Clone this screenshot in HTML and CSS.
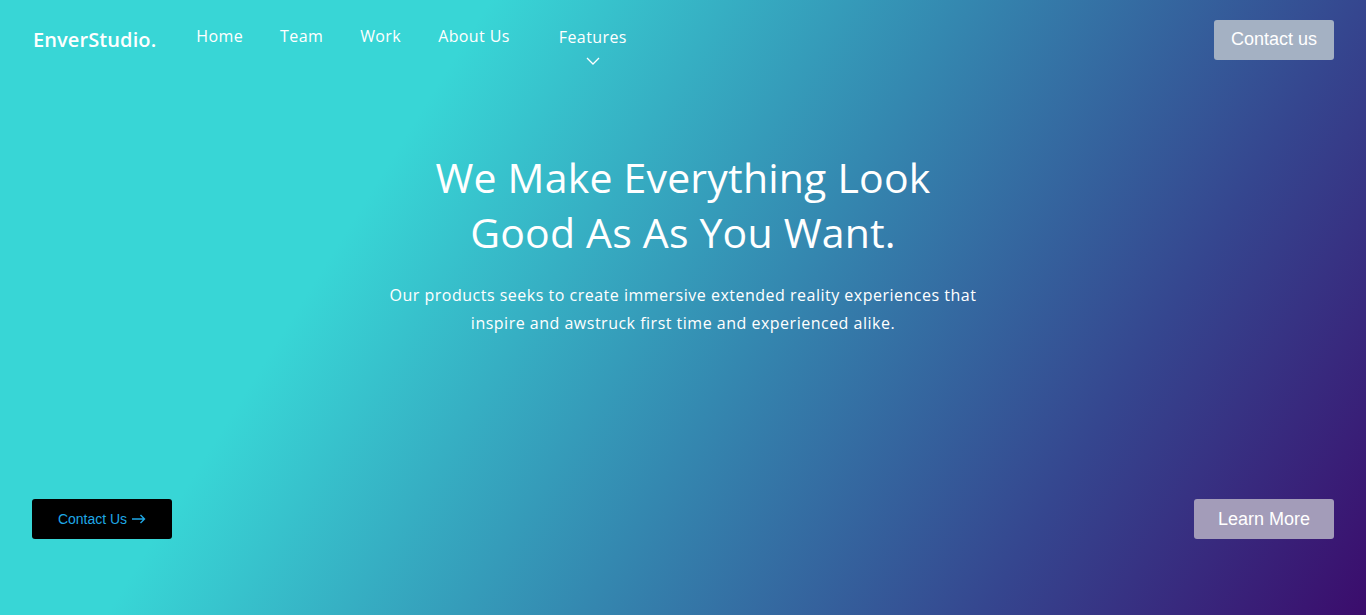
FILE: index.html
```html
<!DOCTYPE html>
<html lang="en">
<head>
<meta charset="utf-8">
<title>EnverStudio</title>
<link rel="stylesheet" href="styles.css">
</head>
<body>
<div class="page">
  <header class="nav">
    <div class="brand">EnverStudio.</div>
    <nav class="links">
      <a class="link" href="#">Home</a>
      <a class="link" href="#">Team</a>
      <a class="link" href="#">Work</a>
      <a class="link" href="#">About Us</a>
      <a class="link features" href="#">Features
        <svg class="chev" width="14" height="8" viewBox="0 0 14 8"><path d="M1 1l6 6 6-6" fill="none" stroke="#fff" stroke-width="1.3"/></svg>
      </a>
    </nav>
    <button class="btn-top">Contact us</button>
  </header>
  <section class="hero">
    <h1 class="title">We Make Everything Look<br>Good As As You Want.</h1>
    <p class="lead">Our products seeks to create immersive extended reality experiences that<br>inspire and awstruck first time and experienced alike.</p>
  </section>
  <div class="actions">
    <button class="btn-dark">Contact Us <svg class="arrow" width="14" height="10" viewBox="0 0 14 10"><path d="M0 5h12.5M8.5 1l4 4-4 4" fill="none" stroke="#1fa8e6" stroke-width="1.4"/></svg></button>
    <button class="btn-light">Learn More</button>
  </div>
</div>
</body>
</html>
```
FILE: styles.css
```css
* { box-sizing: border-box; }
html, body { margin: 0; padding: 0; height: 100%; }
body {
  font-family: "Open Sans", "Liberation Sans", sans-serif;
  color: #fff;
  overflow: hidden;
}
.page {
  height: 615px;
  display: flex;
  flex-direction: column;
  background: linear-gradient(122deg, #38d6d6 0%, #38d6d6 28%, #3488b0 55%, #35468f 78%, #3b0c6c 100%);
}
.nav {
  display: flex;
  align-items: flex-start;
  padding: 20px 32px 0 33px;
}
.brand {
  font-size: 20px;
  font-weight: 600;
  letter-spacing: 0.1px;
  margin-top: 6px;
}
.links {
  display: flex;
  margin-left: 40px;
  margin-top: 5px;
}
.link {
  color: #fff;
  text-decoration: none;
  font-size: 16px;
  letter-spacing: 0.4px;
  margin-right: 37px;
  line-height: 22px;
}
.features {
  display: flex;
  flex-direction: column;
  align-items: center;
  margin-left: 12px;
  margin-top: 1px;
}
.chev { margin-top: 9px; }
.btn-top {
  margin-left: auto;
  width: 120px;
  height: 40px;
  border: none;
  border-radius: 3px;
  background: #a4b1c3;
  color: #fff;
  font-family: "Liberation Sans", Arial, sans-serif;
  font-size: 18px;
  padding-bottom: 2px;
}
.hero {
  display: flex;
  flex-direction: column;
  align-items: center;
  text-align: center;
  margin-top: 85px;
}
.title {
  margin: 0;
  font-size: 41px;
  font-weight: 500;
  line-height: 55px;
  letter-spacing: 0.2px;
}
.lead {
  margin: 21px 0 0;
  font-size: 16px;
  line-height: 28px;
  letter-spacing: 0.5px;
}
.actions {
  margin-top: auto;
  display: flex;
  justify-content: space-between;
  padding: 0 32px 76px 32px;
}
.btn-dark, .btn-light {
  width: 140px;
  height: 40px;
  border: none;
  border-radius: 3px;
  font-family: "Liberation Sans", Arial, sans-serif;
}
.btn-dark {
  background: #000;
  color: #1fa8e6;
  font-size: 14px;
  display: flex;
  align-items: center;
  justify-content: center;
  gap: 5px;
  padding-right: 6px;
}
.btn-light {
  background: #a39cb9;
  color: #fff;
  font-size: 18px;
}
```
